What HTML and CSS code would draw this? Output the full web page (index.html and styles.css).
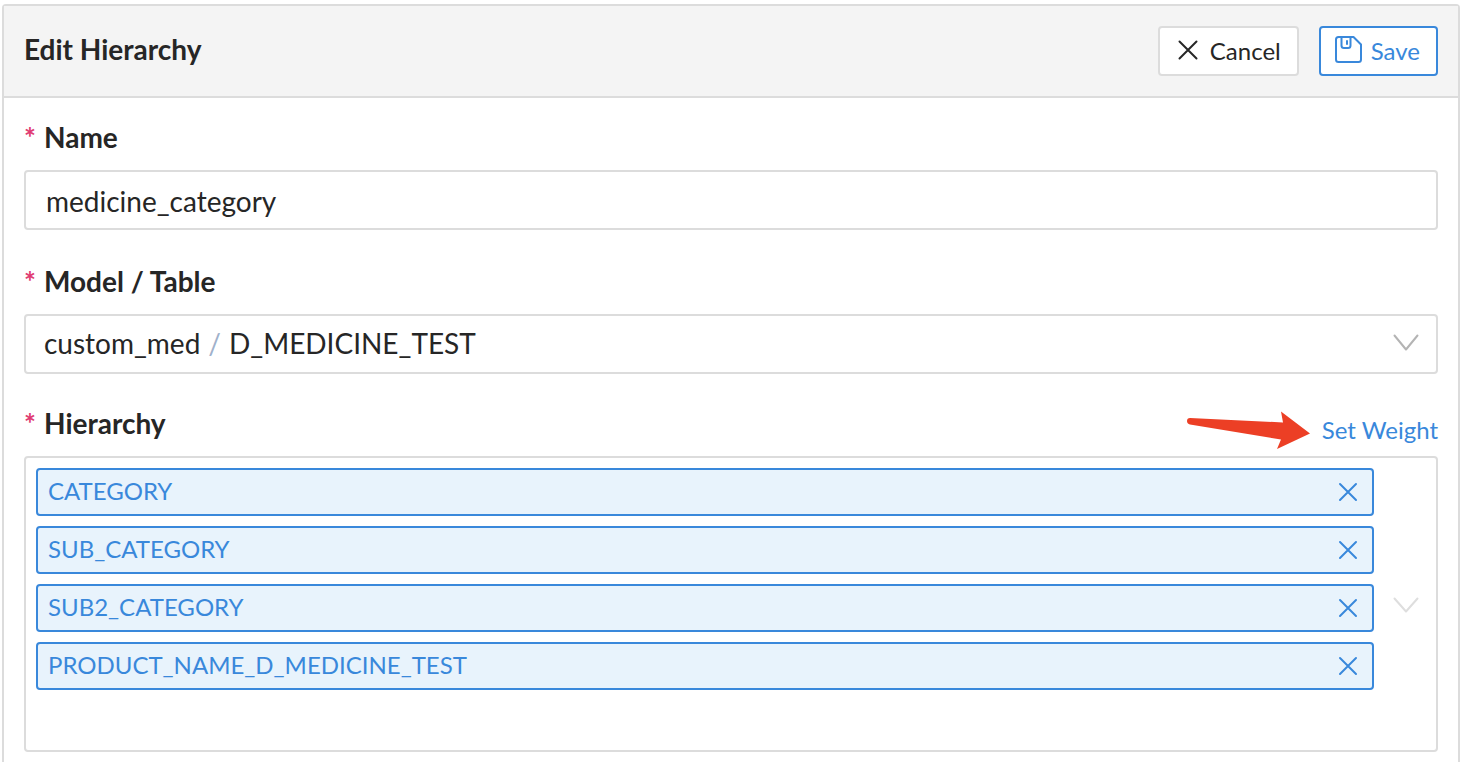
FILE: index.html
```html
<!DOCTYPE html>
<html lang="en">
<head>
<meta charset="utf-8">
<meta name="viewport" content="width=device-width, initial-scale=1">
<title>Edit Hierarchy</title>
<link rel="stylesheet" href="styles.css">
</head>
<body>
<form class="panel">
  <header class="panel-header">
    <h1 class="panel-title">Edit Hierarchy</h1>
    <div class="actions">
      <button class="btn" type="button">
        <svg class="btn-icon" viewBox="0 0 28 28" aria-hidden="true"><path d="M5.500 4.500l17 17M22.500 4.500l-17 17"/></svg>
        Cancel
      </button>
      <button class="btn btn-primary" type="submit">
        <svg class="btn-icon" viewBox="0 0 28 28" aria-hidden="true"><path d="M3.500 0h15l7.500 7.500v15q0 2.500-2.500 2.500h-20q-2.500 0-2.500-2.500v-20q0-2.500 2.500-2.500zM6.500 0v8.500q0 2.500 2.500 2.500h4q2.500 0 2.500-2.500v-8.500M12 4v3"/></svg>
        Save
      </button>
    </div>
  </header>
  <div class="panel-body">
    <div class="field">
      <div class="label-row"><label class="label" for="name"><span class="required">*</span>Name</label></div>
      <input class="control text-input" id="name" type="text" value="medicine_category">
    </div>
    <div class="field field-compact">
      <div class="label-row"><label class="label" for="model"><span class="required">*</span>Model / Table</label></div>
      <button class="control picker" id="model" type="button" aria-haspopup="listbox">
        <span>custom_med<span class="slash">/</span>D_MEDICINE_TEST</span>
        <svg class="chevron" viewBox="0 0 26 18" aria-hidden="true"><path d="M1.500 1.500l11.500 14 11.500-14"/></svg>
      </button>
    </div>
    <div class="field">
      <div class="label-row">
        <label class="label" for="level"><span class="required">*</span>Hierarchy</label>
        <div class="weight">
          <svg class="arrow" viewBox="0 0 124 40" aria-hidden="true"><path d="M3 8L96 12.500 94 1.500 123 23.500 90 39 94 29.500 3 14.500Q0 13.500 0 11Q0 8 3 8Z"/></svg>
          <a class="weight-link" href="#weight">Set Weight</a>
        </div>
      </div>
      <div class="levels">
        <ul class="tags">
          <li class="tag">CATEGORY<button class="remove" type="button" aria-label="Remove CATEGORY"><svg class="cross" viewBox="0 0 20 20"><path d="M2 2l16 16M18 2L2 18"/></svg></button></li>
          <li class="tag">SUB_CATEGORY<button class="remove" type="button" aria-label="Remove SUB_CATEGORY"><svg class="cross" viewBox="0 0 20 20"><path d="M2 2l16 16M18 2L2 18"/></svg></button></li>
          <li class="tag">SUB2_CATEGORY<button class="remove" type="button" aria-label="Remove SUB2_CATEGORY"><svg class="cross" viewBox="0 0 20 20"><path d="M2 2l16 16M18 2L2 18"/></svg></button></li>
          <li class="tag">PRODUCT_NAME_D_MEDICINE_TEST<button class="remove" type="button" aria-label="Remove PRODUCT_NAME_D_MEDICINE_TEST"><svg class="cross" viewBox="0 0 20 20"><path d="M2 2l16 16M18 2L2 18"/></svg></button></li>
          <li class="search"><input class="search-input" id="level" type="text"></li>
        </ul>
        <svg class="chevron chevron-light" viewBox="0 0 26 18" aria-hidden="true"><path d="M1.500 3.500l11.500 13 11.500-13"/></svg>
      </div>
    </div>
  </div>
</form>
</body>
</html>
```
FILE: styles.css
```css
* {
  box-sizing: border-box;
}

body {
  margin: 0;
  padding: 4px 12px 0 2px;
  background: #fff;
  color: #262626;
  font: 28px/38px Lato, sans-serif;
}

button,
input {
  font: inherit;
  color: inherit;
}

button {
  cursor: pointer;
}

svg {
  display: block;
  flex: none;
  fill: none;
  stroke: currentColor;
  stroke-width: 2;
  stroke-linecap: round;
  stroke-linejoin: round;
}

.panel {
  border: 2px solid #dcdcdc;
  border-bottom: 0;
  border-radius: 4px 4px 0 0;
}

.panel-header {
  display: flex;
  justify-content: space-between;
  padding: 20px;
  border-bottom: 2px solid #dcdcdc;
  background: #f4f4f4;
}

.panel-title {
  margin: 4px 0 0;
  font-size: 28px;
  line-height: 38px;
  font-weight: 700;
}

.actions {
  display: flex;
  gap: 20px;
}

.btn {
  display: flex;
  align-items: center;
  gap: 8px;
  height: 50px;
  padding: 0 16px 0 14px;
  border: 2px solid #dcdcdc;
  border-radius: 4px;
  background: #fff;
  font-size: 24px;
}

.btn-primary {
  border-color: #3988db;
  color: #3988db;
}

.btn-icon {
  width: 28px;
  height: 28px;
  overflow: visible;
}

.panel-body {
  display: flex;
  flex-direction: column;
  gap: 30px;
  padding: 20px 20px 10px;
}

.field:first-child {
  margin-bottom: 2px;
}

.label-row {
  display: flex;
  justify-content: space-between;
  height: 52px;
}

.label {
  font-weight: 700;
}

.required {
  display: inline-block;
  width: 20px;
  color: #e03b71;
}

.control {
  width: 100%;
  height: 60px;
  border: 2px solid #dcdcdc;
  border-radius: 4px;
  background: #fff;
}

.text-input {
  display: block;
  padding: 2px 20px 0;
}

.picker {
  display: flex;
  align-items: center;
  justify-content: space-between;
  padding: 0 17px 2px 18px;
  text-align: left;
}

.slash {
  margin: 0 8px;
  color: #9fb1cb;
}

.chevron {
  width: 26px;
  height: 18px;
  color: #b4b4b4;
}

.chevron-light {
  color: #dedede;
}

.weight {
  display: flex;
  align-items: center;
  align-self: flex-end;
  gap: 11px;
  padding-bottom: 2px;
}

.arrow {
  width: 124px;
  height: 40px;
  fill: #ec3f25;
  stroke: none;
}

.weight-link {
  color: #3988db;
  font-size: 24px;
  line-height: 48px;
  text-decoration: none;
}

.levels {
  display: flex;
  align-items: center;
  gap: 19px;
  padding: 10px 17px 10px 10px;
  border: 2px solid #dcdcdc;
  border-radius: 4px;
}

.tags {
  display: flex;
  flex: 1;
  flex-direction: column;
  gap: 10px;
  margin: 0;
  padding: 0;
  list-style: none;
}

.tag {
  display: flex;
  justify-content: space-between;
  height: 48px;
  padding: 2px 14px 0 10px;
  border: 2px solid #3988db;
  border-radius: 4px;
  background: #e8f3fc;
  color: #3988db;
  font-size: 24px;
}

.remove {
  display: flex;
  align-items: center;
  padding: 0 0 2px;
  border: 0;
  background: none;
}

.cross {
  width: 20px;
  height: 20px;
}

.search {
  height: 40px;
}

.search-input {
  display: block;
  width: 100%;
  height: 40px;
  padding: 0;
  border: 0;
  outline: 0;
  background: none;
}
```
